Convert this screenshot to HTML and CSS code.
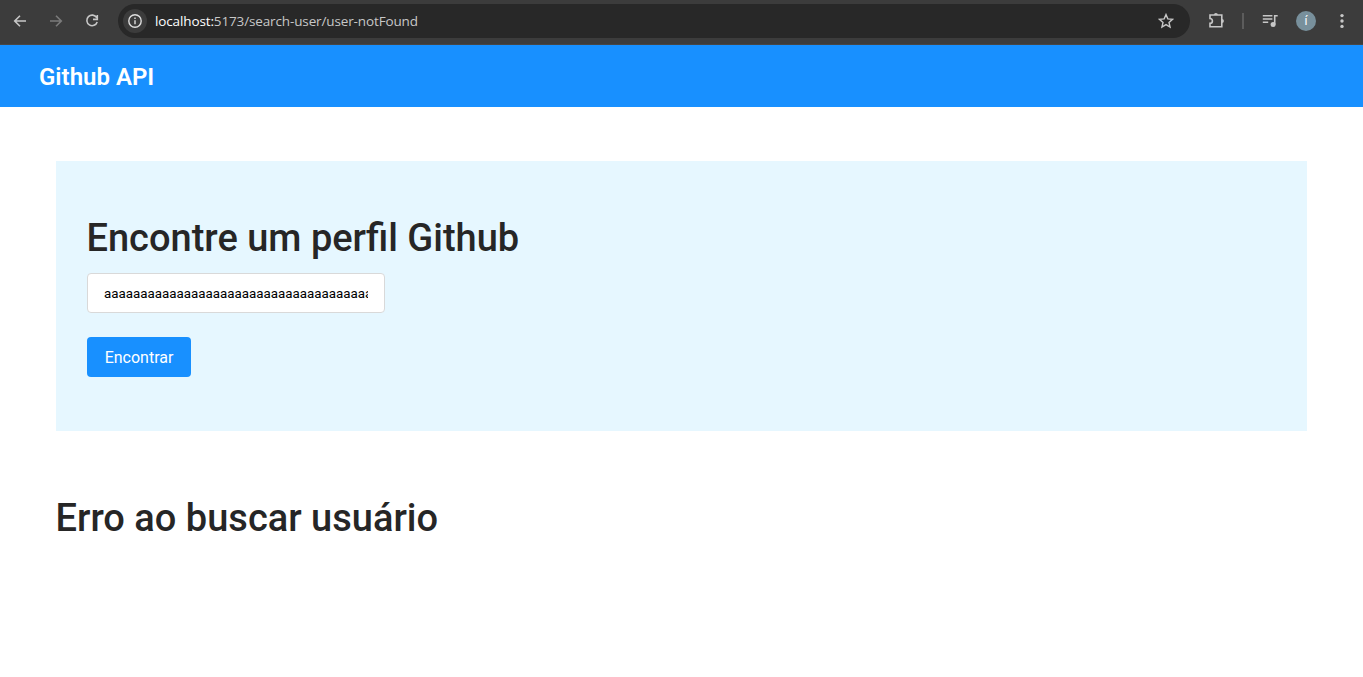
FILE: index.html
```
<!DOCTYPE html>
<html lang="pt-BR">
<head>
<meta charset="utf-8">
<title>Github API</title>
<link rel="stylesheet" href="styles.css">
</head>
<body>
<div class="toolbar">
  <svg class="icon back" viewBox="0 0 16 16"><path d="M14 8H3M8 2.7 2.7 8 8 13.3"/></svg>
  <svg class="icon forward" viewBox="0 0 16 16"><path d="M2 8h11M8 2.7 13.3 8 8 13.3"/></svg>
  <svg class="icon reload" viewBox="0 0 16 16"><path d="M12.7 4.7A5.3 5.3 0 1 0 13.2 9M13.3 2v4.4H9"/></svg>
  <div class="omnibox">
    <span class="site-info"><svg class="icon" viewBox="0 0 16 16"><circle cx="8" cy="8" r="6.2"/><path d="M8 7.2v4M8 4.5v1.6"/></svg></span>
    <span class="url"><span class="host">localhost:</span>5173/search-user/user-notFound</span>
    <svg class="icon star" viewBox="0 0 16 16"><path d="m8 1.6 1.85 4.3 4.65.4-3.5 3.1 1.05 4.6L8 11.6 3.95 14 5 9.4 1.5 6.3l4.65-.4Z"/></svg>
  </div>
  <svg class="icon puzzle" viewBox="0 0 18 18"><path d="M2 3h11.8v11.8H2v-3.4c3.2 0 3.2-4.9 0-4.9Z"/><path class="solid" d="M5.9 3a2 2 0 0 1 4 0ZM13.9 6.9a2 2 0 0 1 0 4Z"/></svg>
  <span class="divider"></span>
  <svg class="icon media" viewBox="0 0 16 16"><path d="M.8 2.7h9.6M.8 6h9.6M.8 9.3h5.4M12.7 11.5V2.7h3"/><circle class="solid" cx="11.1" cy="11.4" r="2.5"/></svg>
  <span class="avatar">í</span>
  <svg class="icon menu" viewBox="0 0 16 16"><circle cx="8" cy="2.6" r="1.7"/><circle cx="8" cy="8" r="1.7"/><circle cx="8" cy="13.4" r="1.7"/></svg>
</div>
<header class="header">Github API</header>
<main class="content">
  <section class="search">
    <h1 class="title">Encontre um perfil Github</h1>
    <input class="field" type="text" value="aaaaaaaaaaaaaaaaaaaaaaaaaaaaaaaaaaaaaaaaaaaaaaaa">
    <button class="button" type="button">Encontrar</button>
  </section>
  <h1 class="title error">Erro ao buscar usuário</h1>
</main>
</body>
</html>
```
FILE: styles.css
```
* { box-sizing: border-box; }
body {
  margin: 0;
  background: #fff;
  color: #262626;
  font-family: Roboto, sans-serif;
}
.toolbar {
  display: flex;
  align-items: center;
  height: 45px;
  padding: 0 13px 3px 12px;
  background: #3c3c3c;
  border-bottom: 1px solid #484644;
}
.icon {
  flex: none;
  width: 16px;
  height: 16px;
  fill: none;
  stroke: #c7c7c7;
  stroke-width: 1.6;
}
.icon .solid { fill: #c7c7c7; stroke: none; }
.forward { margin-left: 20px; stroke: #7b7b7b; }
.reload { margin-left: 20px; }
.omnibox {
  display: flex;
  flex: none;
  align-items: center;
  width: 1072px;
  height: 34px;
  margin-left: 18px;
  padding: 0 16px 0 5px;
  border-radius: 17px;
  background: #282828;
}
.site-info {
  display: flex;
  align-items: center;
  justify-content: center;
  width: 24px;
  height: 24px;
  border-radius: 50%;
  background: #3c3c3c;
}
.site-info .icon { stroke: #dedede; stroke-width: 1.4; }
.url {
  margin-left: 8px;
  color: #c7c7c7;
  font: 13.5px/20px "Open Sans", "Noto Sans", sans-serif;
  letter-spacing: -0.13px;
  white-space: nowrap;
}
.host { color: #fff; }
.star { margin-left: auto; stroke-width: 1.4; }
.puzzle { width: 18px; height: 18px; margin-left: 18px; }
.divider {
  width: 2px;
  height: 16px;
  margin-left: 16px;
  background: #5c5c5c;
}
.media { margin-left: 18px; }
.avatar {
  width: 20px;
  height: 20px;
  margin-left: 18px;
  border-radius: 50%;
  background: #78909c;
  color: #fff;
  font-size: 12px;
  line-height: 20px;
  text-align: center;
}
.menu { margin-left: 18px; fill: #c7c7c7; stroke: none; }
.header {
  height: 62px;
  padding-left: 39px;
  background: #1890ff;
  color: #fff;
  font-size: 24px;
  font-weight: 600;
  line-height: 64px;
}
.content { padding: 54px 56px 0; }
.search {
  display: flex;
  flex-direction: column;
  align-items: flex-start;
  height: 270px;
  padding: 54px 31px;
  background: #e6f7ff;
}
.title {
  margin: 0;
  font-size: 38px;
  font-weight: 500;
  line-height: 46px;
  text-indent: -0.5px;
}
.field {
  width: 298px;
  height: 40px;
  margin-top: 12px;
  padding: 0 16px;
  border: 1px solid #d9d9d9;
  border-radius: 4px;
  background: #fff;
  color: #000;
  font: 13.333px Roboto, sans-serif;
}
.button {
  width: 104px;
  height: 40px;
  margin-top: 24px;
  padding: 0;
  border: 0;
  border-radius: 4px;
  background: #1890ff;
  color: #fff;
  font: 16px Roboto, sans-serif;
}
.error { margin-top: 64px; }
```
